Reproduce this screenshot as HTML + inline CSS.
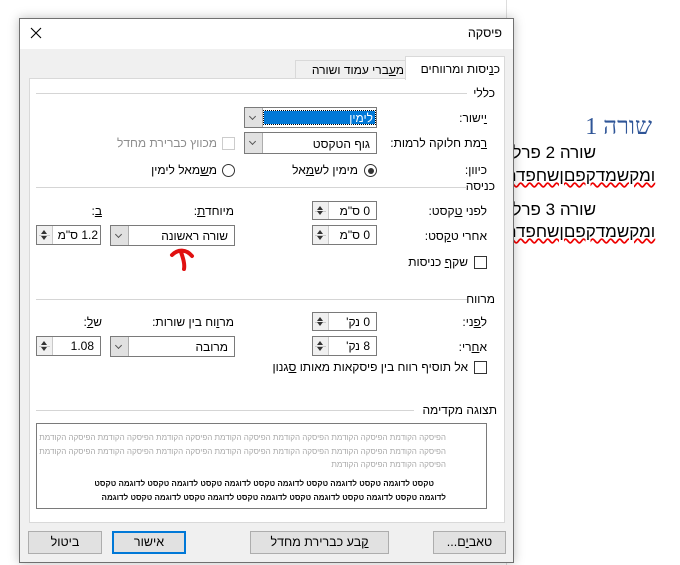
<!DOCTYPE html>
<html><head><meta charset="utf-8">
<style>
*{box-sizing:border-box;margin:0;padding:0}
body{width:680px;height:565px;background:#fff;position:relative;overflow:hidden;font-family:"Liberation Sans","DejaVu Sans",sans-serif;font-size:12px;color:#000}
.a{position:absolute;white-space:nowrap}
.r{direction:rtl}
.t{position:absolute;white-space:nowrap;direction:rtl;line-height:14px}
.line{position:absolute;height:1px;background:#d5d5d5}
.box{position:absolute;background:#fff;border:1px solid #7a7a7a}
.spin{position:absolute;background:#fff;border:1px solid #7a7a7a}
.spin .arr{position:absolute;left:0;top:0;bottom:0;width:16px;border-right:1px solid #c9c9c9;background:#f0f0f0}
.spin .arr:before{content:"";position:absolute;left:4px;top:4px;border:3.5px solid transparent;border-bottom:4px solid #333;border-top:none}
.spin .arr:after{content:"";position:absolute;left:4px;bottom:4px;border:3.5px solid transparent;border-top:4px solid #333;border-bottom:none}
.spin .arr i{position:absolute;left:2px;right:2px;top:50%;height:1px;background:#c9c9c9}
.spin span{position:absolute;right:6px;top:3px;direction:rtl}
.combo{position:absolute;background:#fff;border:1px solid #7a7a7a}
.combo .dd{position:absolute;left:0;top:0;bottom:0;width:18px;background:#e1e1e1;border-right:1px solid #adadad}
.combo .dd:after{content:"";position:absolute;left:5px;top:6px;width:4px;height:4px;border-right:1px solid #555;border-bottom:1px solid #555;transform:rotate(45deg)}
.combo span{position:absolute;right:6px;top:3px;direction:rtl}
.cb{position:absolute;width:13px;height:13px;border:1px solid #333;background:#fff}
.btn{position:absolute;height:23px;background:#e1e1e1;border:1px solid #adadad;text-align:center;line-height:20px;direction:rtl;font-size:12.5px}
.pv{position:absolute;right:40px;direction:rtl;font-size:8px;white-space:nowrap;line-height:10px}
u{text-decoration:underline}
</style></head><body>

<!-- document behind -->
<div style="position:absolute;left:506px;top:0;width:1px;height:565px;background:#ddd"></div>
<div class="t" style="right:28px;top:113px;font-family:'Liberation Serif','DejaVu Serif',serif;font-size:24px;line-height:28px;color:#2f5597">שורה 1</div>
<div class="t" style="right:84px;top:143px;font-size:17px;line-height:20px">שורה 2 פרלג</div>
<div class="t" style="right:532px;top:166px;font-size:17px;line-height:20px;text-decoration:underline wavy #e00;direction:ltr;left:505px">ומקשמדקפםןשחפדם</div>
<div class="t" style="right:84px;top:200px;font-size:17px;line-height:20px">שורה 3 פרלג</div>
<div class="t" style="right:532px;top:222px;font-size:17px;line-height:20px;text-decoration:underline wavy #e00;direction:ltr;left:505px">ומקשמדקפםןשחפדם</div>

<!-- dialog -->
<div style="position:absolute;left:19px;top:18px;width:495px;height:545px;background:#f0f0f0;border:1px solid #707070;box-shadow:0 0 10px rgba(0,0,0,.25)">
</div>
<div style="position:absolute;left:20px;top:19px;width:493px;height:30px;background:#fff"></div>
<svg class="a" style="left:30px;top:27px" width="12" height="12"><path d="M1 1L11 11M11 1L1 11" stroke="#000" stroke-width="1.1"/></svg>
<div class="t" style="right:178px;top:26px;font-size:12.5px">פיסקה</div>

<!-- tabs -->
<div style="position:absolute;left:295px;top:60px;width:111px;height:19px;background:#f0f0f0;border:1px solid #d9d9d9;border-bottom:none"></div>
<div class="t" style="right:276px;top:63px">מ<u>ע</u>ברי עמוד ושורה</div>
<div style="position:absolute;left:29px;top:78px;width:476px;height:445px;background:#fff;border:1px solid #d9d9d9"></div>
<div style="position:absolute;left:405px;top:56px;width:100px;height:24px;background:#fff;border:1px solid #d9d9d9;border-bottom:none"></div>
<div class="t" style="right:180px;top:62px">כ<u>נ</u>יסות ומרווחים</div>

<!-- כללי -->
<div class="t" style="right:185px;top:86px">כללי</div>
<div class="line" style="left:36px;width:431px;top:93px"></div>

<div class="t" style="right:193px;top:111px"><u>י</u>ישור:</div>
<div class="combo" style="left:244px;top:107px;width:133px;height:21px"><div class="dd"></div>
<div style="position:absolute;left:19px;right:1px;top:3px;bottom:3px;background:#0078d7;outline:1px dotted #000"></div>
<span style="color:#fff;top:3px;right:3px">לימין</span></div>

<div class="t" style="right:193px;top:136px"><u>ר</u>מת חלוקה לרמות:</div>
<div class="combo" style="left:244px;top:132px;width:133px;height:22px"><div class="dd"></div><span style="top:4px">גוף הטקסט</span></div>
<div class="cb" style="left:222px;top:137px;border-color:#ccc"></div>
<div class="t" style="right:463px;top:136px;color:#8d8d8d">מכווץ כברירת מחדל</div>

<div class="t" style="right:193px;top:163px">כיוון:</div>
<div style="position:absolute;left:364px;top:164px;width:13px;height:13px;border:1px solid #333;border-radius:50%;background:#fff"><div style="position:absolute;left:2.5px;top:2.5px;width:6px;height:6px;border-radius:50%;background:#333"></div></div>
<div class="t" style="right:322px;top:163px">מימין לש<u>מ</u>אל</div>
<div style="position:absolute;left:222px;top:164px;width:13px;height:13px;border:1px solid #333;border-radius:50%;background:#fff"></div>
<div class="t" style="right:463px;top:163px">מ<u>ש</u>מאל לימין</div>

<!-- כניסה -->
<div class="t" style="right:185px;top:179px">כניסה</div>
<div class="line" style="left:36px;width:431px;top:187px"></div>

<div class="t" style="right:193px;top:204px">לפני <u>ט</u>קסט:</div>
<div class="spin" style="left:312px;top:201px;width:65px;height:19px"><div class="arr"><i></i></div><span style="top:2px">0 ס"מ</span></div>
<div class="t" style="right:193px;top:229px">אחרי ט<u>ק</u>סט:</div>
<div class="spin" style="left:312px;top:225px;width:65px;height:20px"><div class="arr"><i></i></div><span style="top:2px">0 ס"מ</span></div>

<div class="t" style="right:446px;top:204px">מיוחד<u>ת</u>:</div>
<div class="combo" style="left:110px;top:225px;width:125px;height:21px"><div class="dd"></div><span style="top:3px">שורה ראשונה</span></div>
<div class="t" style="right:578px;top:204px"><u>ב</u>:</div>
<div class="spin" style="left:36px;top:225px;width:65px;height:20px"><div class="arr"><i></i></div><span style="top:2px;right:2px">1.2 ס"מ</span></div>

<svg class="a" style="left:168px;top:246px" width="30" height="26"><path d="M4 9 C10 3 18 3 24 10 M13 6 C15 12 17 18 16 23" stroke="#e01010" stroke-width="4" fill="none" stroke-linecap="round"/></svg>

<div class="cb" style="left:474px;top:256px"></div>
<div class="t" style="right:212px;top:255px">שק<u>ף</u> כניסות</div>

<!-- מרווח -->
<div class="t" style="right:185px;top:292px">מרווח</div>
<div class="line" style="left:36px;width:431px;top:299px"></div>

<div class="t" style="right:193px;top:315px">ל<u>פ</u>ני:</div>
<div class="spin" style="left:312px;top:312px;width:65px;height:19px"><div class="arr"><i></i></div><span style="top:2px">0 נק'</span></div>
<div class="t" style="right:193px;top:340px">א<u>ח</u>רי:</div>
<div class="spin" style="left:312px;top:336px;width:65px;height:20px"><div class="arr"><i></i></div><span style="top:2px">8 נק'</span></div>

<div class="t" style="right:446px;top:315px">מר<u>ו</u>וח בין שורות:</div>
<div class="combo" style="left:110px;top:336px;width:125px;height:21px"><div class="dd"></div><span style="top:3px">מרובה</span></div>
<div class="t" style="right:578px;top:315px">ש<u>ל</u>:</div>
<div class="spin" style="left:36px;top:336px;width:65px;height:20px"><div class="arr"><i></i></div><span style="top:2px">1.08</span></div>

<div class="cb" style="left:474px;top:361px"></div>
<div class="t" style="right:212px;top:360px">אל תוסיף רווח בין פיסקאות מאותו <u>ס</u>גנון</div>

<!-- preview -->
<div class="t" style="right:183px;top:403px">תצוגה מקדימה</div>
<div class="line" style="left:36px;width:378px;top:410px"></div>
<div class="box" style="left:36px;top:423px;width:451px;height:86px;overflow:hidden">
<div class="pv" style="top:9px;color:#a8a8a8">הפיסקה הקודמת הפיסקה הקודמת הפיסקה הקודמת הפיסקה הקודמת הפיסקה הקודמת הפיסקה הקודמת הפיסקה הקודמת</div>
<div class="pv" style="top:23px;color:#a8a8a8">הפיסקה הקודמת הפיסקה הקודמת הפיסקה הקודמת הפיסקה הקודמת הפיסקה הקודמת הפיסקה הקודמת הפיסקה הקודמת</div>
<div class="pv" style="top:36px;color:#a8a8a8">הפיסקה הקודמת הפיסקה הקודמת</div>
<div class="pv" style="top:55px;right:52px;color:#111;font-weight:bold">טקסט לדוגמה טקסט לדוגמה טקסט לדוגמה טקסט לדוגמה טקסט לדוגמה טקסט לדוגמה טקסט</div>
<div class="pv" style="top:69px;color:#111;font-weight:bold">לדוגמה טקסט לדוגמה טקסט לדוגמה טקסט לדוגמה טקסט לדוגמה טקסט לדוגמה טקסט לדוגמה</div>
</div>

<!-- buttons -->
<div class="btn" style="left:28px;top:531px;width:74px">ביטול</div>
<div class="btn" style="left:112px;top:531px;width:74px;border:2px solid #0078d7;line-height:18px">אישור</div>
<div class="btn" style="left:250px;top:531px;width:139px"><u>ק</u>בע כברירת מחדל</div>
<div class="btn" style="left:433px;top:531px;width:73px">טאב<u>י</u>ם...</div>

</body></html>
